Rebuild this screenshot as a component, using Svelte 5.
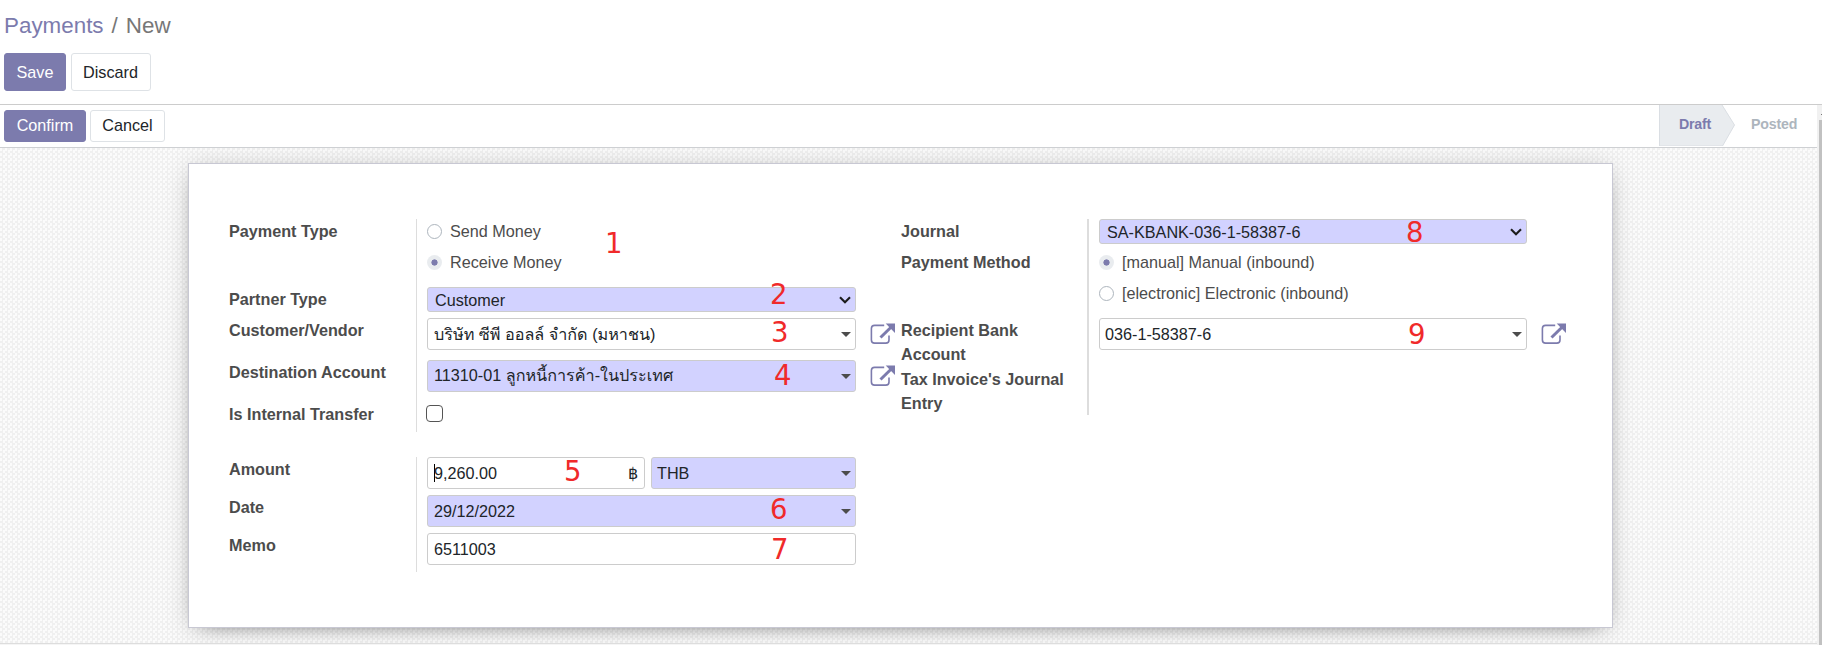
<script>
  const notes = [
    { n: 1, x: 605, y: 227 }, { n: 2, x: 770, y: 278 }, { n: 3, x: 771, y: 316 },
    { n: 4, x: 774, y: 359 }, { n: 5, x: 564, y: 455 }, { n: 6, x: 770, y: 493 },
    { n: 7, x: 771, y: 533 }, { n: 8, x: 1406, y: 216 }, { n: 9, x: 1408, y: 318 }
  ];
</script>

{#snippet link()}
  <svg class="ext" viewBox="0 0 26 22" width="26" height="22">
    <path d="M14.2 2.4H4.6Q1.4 2.4 1.4 5.6V17Q1.4 20.1 4.6 20.1H15.8Q19 20.1 19 17V12.4" fill="none" stroke="#7c7bad" stroke-width="1.6" />
    <path d="M10.5 14.5L21 4.2" stroke="#7c7bad" stroke-width="3" />
    <path d="M15.7 0.5H25V10Z" fill="#7c7bad" />
  </svg>
{/snippet}
{#snippet caret()}<i class="caret"></i>{/snippet}
{#snippet chevron()}
  <svg class="chev" viewBox="0 0 12 8" width="12" height="8"><path d="M1 1.2L6 6.2L11 1.2" fill="none" stroke="#1c1c1c" stroke-width="2.1" /></svg>
{/snippet}

<div class="page">
  <header>
    <div class="crumbs"><span class="parent">Payments</span><span class="sep">/</span><span>New</span></div>
    <div class="actions"><button class="primary save">Save</button><button class="discard">Discard</button></div>
  </header>
  <div class="content">
    <div class="main">
      <div class="statusbar">
        <button class="primary confirm">Confirm</button><button class="cancel">Cancel</button>
        <div class="stages">
          <svg class="stage-bg" width="78" height="41" viewBox="0 0 78 41"><path d="M0.5 0V41H63.5L75.5 20L63 0" fill="#e9ecef" stroke="#dadee3" /></svg>
          <b class="draft">Draft</b><b class="posted">Posted</b>
        </div>
      </div>
      <div class="canvas">
        <div class="sheet">
          <div class="left">
            <div class="group g1">
              <div class="row" style:height="68px"><span class="label">Payment Type</span><div class="val radios">
                <div class="opt"><i class="radio"></i><span>Send Money</span></div>
                <div class="opt"><i class="radio on"></i><span>Receive Money</span></div>
              </div></div>
              <div class="row" style:height="31px"><span class="label">Partner Type</span><div class="val"><div class="select">Customer{@render chevron()}</div></div></div>
              <div class="row" style:height="42px"><span class="label">Customer/Vendor</span><div class="val"><div class="input"><span class="thai">บริษัท ซีพี ออลล์ จำกัด (มหาชน)</span>{@render caret()}</div>{@render link()}</div></div>
              <div class="row" style:height="42px"><span class="label">Destination Account</span><div class="val"><div class="input req"><span class="account">11310-01 <span class="thai">ลูกหนี้การค้า-ในประเทศ</span></span>{@render caret()}</div>{@render link()}</div></div>
              <div class="row" style:height="30px"><span class="label">Is Internal Transfer</span><div class="val"><i class="check"></i></div></div>
            </div>
            <div class="group g2">
              <div class="row" style:height="38px"><span class="label">Amount</span><div class="val split">
                <div class="input amount"><i class="cursor"></i><span>9,260.00</span><span class="baht">฿</span></div>
                <div class="input req cur">THB{@render caret()}</div>
              </div></div>
              <div class="row" style:height="38px"><span class="label">Date</span><div class="val"><div class="input req">29/12/2022{@render caret()}</div></div></div>
              <div class="row" style:height="39px"><span class="label">Memo</span><div class="val"><div class="input">6511003</div></div></div>
            </div>
          </div>
          <div class="right">
            <div class="group g3">
              <div class="row" style:height="31px"><span class="label">Journal</span><div class="val"><div class="select">SA-KBANK-036-1-58387-6{@render chevron()}</div></div></div>
              <div class="row" style:height="68px"><span class="label">Payment Method</span><div class="val radios">
                <div class="opt"><i class="radio on"></i><span>[manual] Manual (inbound)</span></div>
                <div class="opt"><i class="radio"></i><span>[electronic] Electronic (inbound)</span></div>
              </div></div>
              <div class="row" style:height="49px"><span class="label">Recipient Bank<br />Account</span><div class="val"><div class="input">036-1-58387-6{@render caret()}</div>{@render link()}</div></div>
              <div class="row" style:height="48px"><span class="label">Tax Invoice's Journal<br />Entry</span></div>
            </div>
          </div>
        </div>
      </div>
      <div class="foot"></div>
    </div>
    <div class="track"><i class="arrow"></i><div class="thumb"></div></div>
  </div>
  {#each notes as m}<span class="note" style:left="{m.x}px" style:top="{m.y}px">{m.n}</span>{/each}
</div>

<style>
  :global(body) { margin: 0; background: #fff; overflow: hidden; }
  .page, .page * { box-sizing: border-box; }
  .page { position: relative; width: 1833px; height: 645px; overflow: hidden; background: #fff; font: 16.2px/24px "Liberation Sans", Arial, sans-serif; color: #4c4c4c; display: flex; flex-direction: column; }
  header { height: 105px; width: 1822px; border-bottom: 1px solid #ccc; padding: 9px 0 0 4px; }
  .crumbs { font-size: 22.4px; line-height: 34px; height: 44px; color: #777; display: flex; }
  .parent { color: #7c7bad; }
  .sep { margin: 0 8px; }
  .actions { display: flex; gap: 5px; }
  button { font: inherit; line-height: 22px; padding: 0; border: 1px solid #dee2e6; border-radius: 3px; background: #fff; color: #212529; }
  .primary { background: #7c7bad; border-color: #7c7bad; color: #fff; }
  .save { width: 62px; height: 38px; }
  .discard { width: 80px; height: 38px; padding-right: 1px; }
  .confirm { width: 82px; height: 32px; padding-bottom: 2px; }
  .cancel { width: 75px; height: 32px; margin-left: 4px; padding-bottom: 2px; }
  .content { flex: 1; display: flex; }
  .main { width: 1817px; display: flex; flex-direction: column; }
  .statusbar { height: 43px; border-bottom: 1px solid #ced0d3; display: flex; align-items: flex-start; padding: 5px 0 0 4px; }
  .stages { margin: -5px 0 0 auto; width: 158px; height: 41px; display: grid; grid-template-columns: 92px 66px; font-size: 14.2px; letter-spacing: -0.2px; line-height: 39px; color: #adb5bd; }
  .stage-bg { grid-area: 1 / 1; }
  .draft { grid-area: 1 / 1; padding-left: 20px; color: #7c7bad; position: relative; }
  .posted { grid-area: 1 / 2; }
  .canvas { height: 495px; padding: 15px 0 0 188px; overflow: hidden; background: repeating-conic-gradient(#f0f0f0 0 25%, #fbfbfb 0 50%) 0 0 / 5px 5px; }
  .sheet { width: 1425px; height: 465px; background: #fff; border: 1px solid #c8c8d3; box-shadow: 0 5px 20px -15px #000, 0 2px 24px rgba(0,0,0,.13); padding: 55px 0 0 40px; display: flex; }
  .left { width: 672px; }
  .group { background: linear-gradient(#ddd, #ddd) 187px 0 / 1px 100% no-repeat; }
  .g2 { margin-top: 25px; }
  .g3 { background-position: 186px 0; background-size: 2px 100%; }
  .row { display: grid; grid-template-columns: 198px 470px; }
  .label { font-weight: 700; white-space: nowrap; }
  .val { display: flex; align-items: flex-start; }
  .radios { flex-direction: column; gap: 7px; }
  .opt { display: flex; align-items: center; height: 24px; gap: 8px; }
  .radio { width: 15px; height: 15px; border: 1px solid #adb5bd; border-radius: 50%; }
  .radio.on { border: 0; background: radial-gradient(circle, #7c7bad 0 2.8px, #e9ecef 3.4px); }
  .select, .input { width: 429px; border: 1px solid #ccc; border-radius: 3px; display: flex; align-items: center; justify-content: space-between; color: #212529; }
  .select { height: 25px; padding: 0 4px 0 7px; background: #d2d2ff; }
  .input { height: 32px; padding: 0 4px 0 6px; background: #fff; }
  .g3 .select, .g3 .input { width: 428px; }
  .g3 .input { padding-left: 5px; }
  .input.req { background: #d2d2ff; }
  .account { padding-bottom: 2px; }
  .caret { border: 5px solid transparent; border-top-color: #4c4c4c; border-bottom: 0; }
  .ext { margin: 5px 0 0 14px; }
  .check { width: 17px; height: 17px; border: 1.5px solid #555; border-radius: 4px; margin: 3px 0 0 -1px; }
  .split { gap: 6px; }
  .split .amount { width: 218px; padding-right: 6px; }
  .split .cur { width: 205px; padding-left: 5px; }
  .cursor { width: 1px; height: 18px; background: #000; margin-right: -1px; }
  .amount span:nth-child(2) { margin-right: auto; }
  .thai { font-family: "Liberation Sans", Loma, Waree, sans-serif; white-space: nowrap; }
  .foot { height: 2px; background: linear-gradient(#ddd 50%, #f5f5f5 50%); }
  .track { width: 5px; background: #f1f1f1; padding-left: 2px; display: flex; flex-direction: column; }
  .arrow { width: 1px; height: 1px; background: #777; margin: 9px 0 5px 2px; }
  .thumb { flex: 1; background: #c1c1c1; }
  .note { position: absolute; font: 27.5px/32px "DejaVu Sans", sans-serif; color: #f02a2a; }
</style>
